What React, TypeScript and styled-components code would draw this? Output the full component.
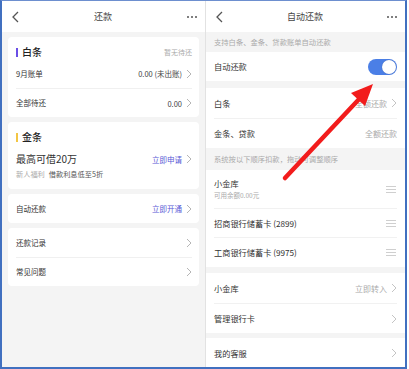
import React from 'react'
import styled, { createGlobalStyle } from 'styled-components'

const GlobalStyle = createGlobalStyle`
  html, body {
    margin: 0;
    padding: 0;
    background: #ffffff;
  }
  body {
    font-family: "Noto Sans CJK SC", "Noto Sans", sans-serif;
    color: #333333;
  }
`

const Chevron = ({ color = '#b5b5b5' }: { color?: string }) => (
  <ChevronSvg width="6" height="10" viewBox="0 0 6 10">
    <polyline points="1,1 5,5 1,9" fill="none" stroke={color} strokeWidth="1" />
  </ChevronSvg>
)

const Back = () => (
  <svg width="7" height="12" viewBox="0 0 7 12">
    <polyline points="6,1 1,6 6,11" fill="none" stroke="#555" strokeWidth="1.3" />
  </svg>
)

const More = () => (
  <Dots>
    <i />
    <i />
    <i />
  </Dots>
)

const Handle = () => (
  <HandleBox>
    <i />
    <i />
    <i />
  </HandleBox>
)

const App = () => {
  return (
    <>
      <GlobalStyle />
      <Frame>
        <LeftScreen>
          <Header>
            <Back />
            <HeaderTitle>还款</HeaderTitle>
            <More />
          </Header>
          <Content>
            <Card>
              <CardHead>
                <CardTitle bar="#6a4ee6">白条</CardTitle>
                <Muted>暂无待还</Muted>
              </CardHead>
              <Row>
                <Label>9月账单</Label>
                <Right>
                  <Value>0.00 (未出账)</Value>
                  <Chevron />
                </Right>
              </Row>
              <Row divided>
                <Label>全部待还</Label>
                <Right>
                  <Value>0.00</Value>
                  <Chevron />
                </Right>
              </Row>
            </Card>

            <Card>
              <CardHead>
                <CardTitle bar="#f3c644">金条</CardTitle>
              </CardHead>
              <BigRow>
                <BigText>最高可借20万</BigText>
                <Right>
                  <Link>立即申请</Link>
                  <Chevron />
                </Right>
              </BigRow>
              <Promo>
                <span>新人福利</span>
                <b>借款利息低至5折</b>
              </Promo>
            </Card>

            <Card>
              <Row tall>
                <Label>自动还款</Label>
                <Right>
                  <Link>立即开通</Link>
                  <Chevron />
                </Right>
              </Row>
            </Card>

            <Card>
              <Row>
                <Label>还款记录</Label>
                <Chevron />
              </Row>
              <Row divided>
                <Label>常见问题</Label>
                <Chevron />
              </Row>
            </Card>
          </Content>
        </LeftScreen>

        <Split />

        <RightScreen>
          <Header>
            <Back />
            <HeaderTitle>自动还款</HeaderTitle>
            <More />
          </Header>
          <Tip h={20}>支持白条、金条、贷款账单自动还款</Tip>
          <Group>
            <SetRow h={29}>
              <SetLabel>自动还款</SetLabel>
              <Toggle>
                <Knob />
              </Toggle>
            </SetRow>
          </Group>
          <Gap h={7} />
          <Group>
            <SetRow h={30}>
              <SetLabel>白条</SetLabel>
              <Right>
                <Hint>全额还款</Hint>
                <Chevron color="#c4c4c4" />
              </Right>
            </SetRow>
            <SetRow h={30} divided>
              <SetLabel>金条、贷款</SetLabel>
              <Hint>全额还款</Hint>
            </SetRow>
          </Group>
          <Tip h={22}>系统按以下顺序扣款，拖动可调整顺序</Tip>
          <Group>
            <SetRow h={38}>
              <Stack>
                <SetLabel>小金库</SetLabel>
                <Sub>可用余额0.00元</Sub>
              </Stack>
              <Handle />
            </SetRow>
            <SetRow h={29} divided>
              <SetLabel>招商银行储蓄卡 (2899)</SetLabel>
              <Handle />
            </SetRow>
            <SetRow h={30} divided>
              <SetLabel>工商银行储蓄卡 (9975)</SetLabel>
              <Handle />
            </SetRow>
          </Group>
          <Gap h={6} />
          <Group>
            <SetRow h={30}>
              <SetLabel>小金库</SetLabel>
              <Right>
                <Hint>立即转入</Hint>
                <Chevron color="#c4c4c4" />
              </Right>
            </SetRow>
            <SetRow h={30} divided>
              <SetLabel>管理银行卡</SetLabel>
              <Chevron color="#c4c4c4" />
            </SetRow>
          </Group>
          <Gap h={5} />
          <Group>
            <SetRow h={30}>
              <SetLabel>我的客服</SetLabel>
              <Chevron color="#c4c4c4" />
            </SetRow>
          </Group>
        </RightScreen>

        <Arrow width="409" height="369" viewBox="0 0 409 369">
          <line x1="285" y1="178" x2="362" y2="96" stroke="#f21c1c" strokeWidth="4.5" strokeLinecap="round" />
          <polygon points="373,84 351,93 365,106" fill="#f21c1c" />
        </Arrow>
      </Frame>
    </>
  )
}

export default App

const Frame = styled.div`
  position: relative;
  box-sizing: border-box;
  width: 407px;
  height: 369px;
  display: flex;
  overflow: hidden;
  border: 2px solid #4170c0;
  border-top: 1px solid #6d8fcf;
  background: #f4f4f4;
`

const LeftScreen = styled.div`
  width: 203px;
  display: flex;
  flex-direction: column;
  background: #f4f4f4;
`

const Split = styled.div`
  width: 1px;
  background: #e2e2e2;
`

const RightScreen = styled.div`
  flex: 1;
  display: flex;
  flex-direction: column;
  background: #f4f4f4;
`

const Header = styled.div`
  height: 31px;
  flex-shrink: 0;
  display: flex;
  align-items: center;
  justify-content: space-between;
  padding: 0 8px 0 10px;
  background: #ffffff;
`

const HeaderTitle = styled.div`
  font-size: 9px;
  line-height: 12px;
  color: #444;
`

const Dots = styled.div`
  display: flex;
  gap: 2px;

  i {
    width: 2px;
    height: 2px;
    border-radius: 50%;
    background: #555;
  }
`

const Content = styled.div`
  padding: 5px 6px 0 6px;
  display: flex;
  flex-direction: column;
  gap: 5px;
`

const Card = styled.div`
  background: #ffffff;
  border-radius: 4px;
  padding: 0 7px 0 8px;
`

const CardHead = styled.div`
  display: flex;
  justify-content: space-between;
  align-items: center;
  padding-top: 8px;
  height: 14px;
`

const CardTitle = styled.div<{ bar: string }>`
  display: flex;
  align-items: center;
  gap: 4px;
  font-size: 10px;
  line-height: 14px;
  font-weight: 500;
  color: #222;

  &::before {
    content: '';
    width: 2px;
    height: 9px;
    background: ${p => p.bar};
  }
`

const Muted = styled.div`
  font-size: 7px;
  color: #aaa;
`

const Row = styled.div<{ divided?: boolean; tall?: boolean }>`
  height: ${p => (p.tall ? 29 : 29)}px;
  display: flex;
  align-items: center;
  justify-content: space-between;
  border-top: ${p => (p.divided ? '1px solid #f0f0f0' : 'none')};
  box-sizing: border-box;
`

const Label = styled.div`
  font-size: 7.5px;
  line-height: 10px;
  color: #333;
`

const Right = styled.div`
  display: flex;
  align-items: center;
  gap: 4px;
`

const Value = styled.div`
  font-size: 7.5px;
  color: #444;
`

const Link = styled.div`
  font-size: 7.5px;
  color: #5858d6;
`

const ChevronSvg = styled.svg`
  display: block;
  flex-shrink: 0;
`

const BigRow = styled.div`
  margin-top: 7px;
  height: 16px;
  display: flex;
  align-items: center;
  justify-content: space-between;
`

const BigText = styled.div`
  font-size: 10px;
  line-height: 16px;
  color: #333;
`

const Promo = styled.div`
  margin-top: 1px;
  padding-bottom: 9px;
  display: flex;
  gap: 4px;
  font-size: 7.2px;
  line-height: 12px;

  span {
    color: #aaa;
  }
  b {
    font-weight: 400;
    color: #555;
  }
`

const Tip = styled.div<{ h: number }>`
  height: ${p => p.h}px;
  flex-shrink: 0;
  display: flex;
  align-items: center;
  padding-left: 8px;
  font-size: 7.3px;
  color: #aaa;
`

const Gap = styled.div<{ h: number }>`
  height: ${p => p.h}px;
  flex-shrink: 0;
`

const Group = styled.div`
  background: #ffffff;
  padding: 0 8px;
  flex-shrink: 0;
`

const SetRow = styled.div<{ h: number; divided?: boolean }>`
  height: ${p => p.h}px;
  box-sizing: border-box;
  display: flex;
  align-items: center;
  justify-content: space-between;
  border-top: ${p => (p.divided ? '1px solid #f1f1f1' : 'none')};
`

const SetLabel = styled.div`
  font-size: 8.2px;
  line-height: 11px;
  color: #333;
`

const Stack = styled.div`
  display: flex;
  flex-direction: column;
  gap: 2px;
`

const Sub = styled.div`
  font-size: 6.5px;
  line-height: 9px;
  color: #aaa;
`

const Hint = styled.div`
  font-size: 8px;
  color: #aaa;
`

const Toggle = styled.div`
  width: 29px;
  height: 16px;
  border-radius: 8px;
  background: #4b7fe6;
  display: flex;
  align-items: center;
  justify-content: flex-end;
  padding: 0 1px;
  box-sizing: border-box;
`

const Knob = styled.div`
  width: 14px;
  height: 14px;
  border-radius: 50%;
  background: #ffffff;
  box-shadow: 0 0 1px rgba(0, 0, 0, 0.3);
`

const HandleBox = styled.div`
  display: flex;
  flex-direction: column;
  gap: 2px;
  margin-right: 1px;

  i {
    width: 10px;
    height: 1px;
    background: #cfcfcf;
  }
`

const Arrow = styled.svg`
  position: absolute;
  left: -2px;
  top: -1px;
  pointer-events: none;
`
